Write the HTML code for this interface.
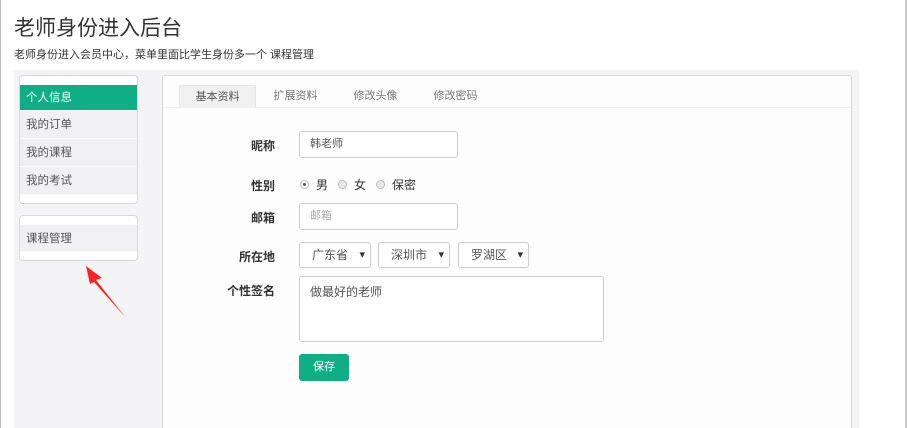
<!DOCTYPE html>
<html style="overflow:hidden;height:428px"><head><meta charset="utf-8"><style>
*{margin:0;padding:0;box-sizing:border-box}
body{width:907px;height:428px;overflow:hidden;background:#fff;font-family:"Liberation Sans","Noto Sans CJK SC",sans-serif;position:relative;color:#333}
.abs{position:absolute}
h1{position:absolute;left:14px;top:12px;font-size:21px;font-weight:normal;color:#333}
.sub{left:14px;top:46px;font-size:11px;color:#333}
.bg{left:14px;top:70px;width:845px;height:358px;background:#f4f4f7}
.side{left:19px;background:#fff;border:1px solid #d8d8dc;border-radius:4px;width:119px}
.item{height:28px;line-height:28px;padding-left:6px;font-size:11.5px;background:#f0f0f2;color:#555;border-bottom:1px solid #fafafa}
.act{background:#0fae84;color:#fff;height:26px;line-height:26px}
.main{left:162px;top:75px;width:690px;height:353px;background:#fdfdfd;border:1px solid #d8d8dc;border-bottom:none;border-radius:3px 3px 0 0}
.tabbar{left:0;top:0;width:688px;height:32px;border-bottom:1px solid #eee}
.tab{top:9px;height:23px;line-height:23px;font-size:11px;color:#777;text-align:center;width:77px}
.lbl{font-size:12px;font-weight:bold;color:#333;text-align:right;width:80px;left:195px}
.in{border:1px solid #ccc;border-radius:3px;background:#fff;font-size:11px;color:#555;padding-left:10px}
.sel{border:1px solid #ccc;border-radius:3px;background:#fff;font-size:12px;color:#555;padding-left:12px;line-height:24px;height:26px}
.sel:after{content:"▾";position:absolute;right:5px;top:0;font-size:11px;color:#333}
.rad{width:9px;height:9px;border:1px solid #bbb;border-radius:50%;background:#e8e8e8}
</style></head><body>
<div class="abs" style="left:0;top:0;width:1px;height:428px;background:#bbb"></div>
<div class="abs" style="left:905px;top:0;width:2px;height:428px;background:#ccc"></div>
<h1>老师身份进入后台</h1>
<div class="abs sub">老师身份进入会员中心，菜单里面比学生身份多一个 课程管理</div>
<div class="abs bg"></div>
<div class="abs side" style="top:75px;height:129px;padding-top:9px">
<div class="item act">个人信息</div><div class="item">我的订单</div><div class="item">我的课程</div><div class="item">我的考试</div></div>
<div class="abs side" style="top:215px;height:46px;padding-top:9px"><div class="item" style="height:27px">课程管理</div></div>
<svg class="abs" style="left:80px;top:262px" width="50" height="60"><polygon points="6,4 22,16 16,18 46,56 14,20 10,22" fill="#f22"/></svg>
<div class="abs main">
<div class="abs tabbar"></div>
<div class="abs tab" style="left:16px;background:#f0f0f0;border:1px solid #e6e6e6;border-bottom:none;color:#555">基本资料</div>
<div class="abs tab" style="left:94px">扩展资料</div>
<div class="abs tab" style="left:174px">修改头像</div>
<div class="abs tab" style="left:254px">修改密码</div>
</div>
<div class="abs lbl" style="top:137px">昵称</div>
<div class="abs in" style="left:299px;top:131px;width:159px;height:27px;line-height:25px">韩老师</div>
<div class="abs lbl" style="top:177px">性别</div>
<div class="abs rad" style="left:300px;top:180px;background:#fff"><div style="width:3px;height:3px;background:#555;border-radius:50%;margin:2px"></div></div>
<div class="abs" style="left:316px;top:176px;font-size:12px">男</div>
<div class="abs rad" style="left:338px;top:180px"></div>
<div class="abs" style="left:354px;top:176px;font-size:12px">女</div>
<div class="abs rad" style="left:376px;top:180px"></div>
<div class="abs" style="left:392px;top:176px;font-size:12px">保密</div>
<div class="abs lbl" style="top:209px">邮箱</div>
<div class="abs in" style="left:299px;top:203px;width:159px;height:27px;line-height:25px;color:#aaa">邮箱</div>
<div class="abs lbl" style="top:248px">所在地</div>
<div class="abs sel" style="left:299px;top:242px;width:72px">广东省</div>
<div class="abs sel" style="left:378px;top:242px;width:72px">深圳市</div>
<div class="abs sel" style="left:458px;top:242px;width:71px">罗湖区</div>
<div class="abs lbl" style="top:282px">个性签名</div>
<div class="abs in" style="left:299px;top:276px;width:305px;height:66px;padding-top:6px;font-size:12px">做最好的老师</div>
<div class="abs" style="left:299px;top:354px;width:50px;height:27px;background:#0fae84;border-radius:3px;color:#fff;font-size:11px;text-align:center;line-height:27px">保存</div>
</body></html>
